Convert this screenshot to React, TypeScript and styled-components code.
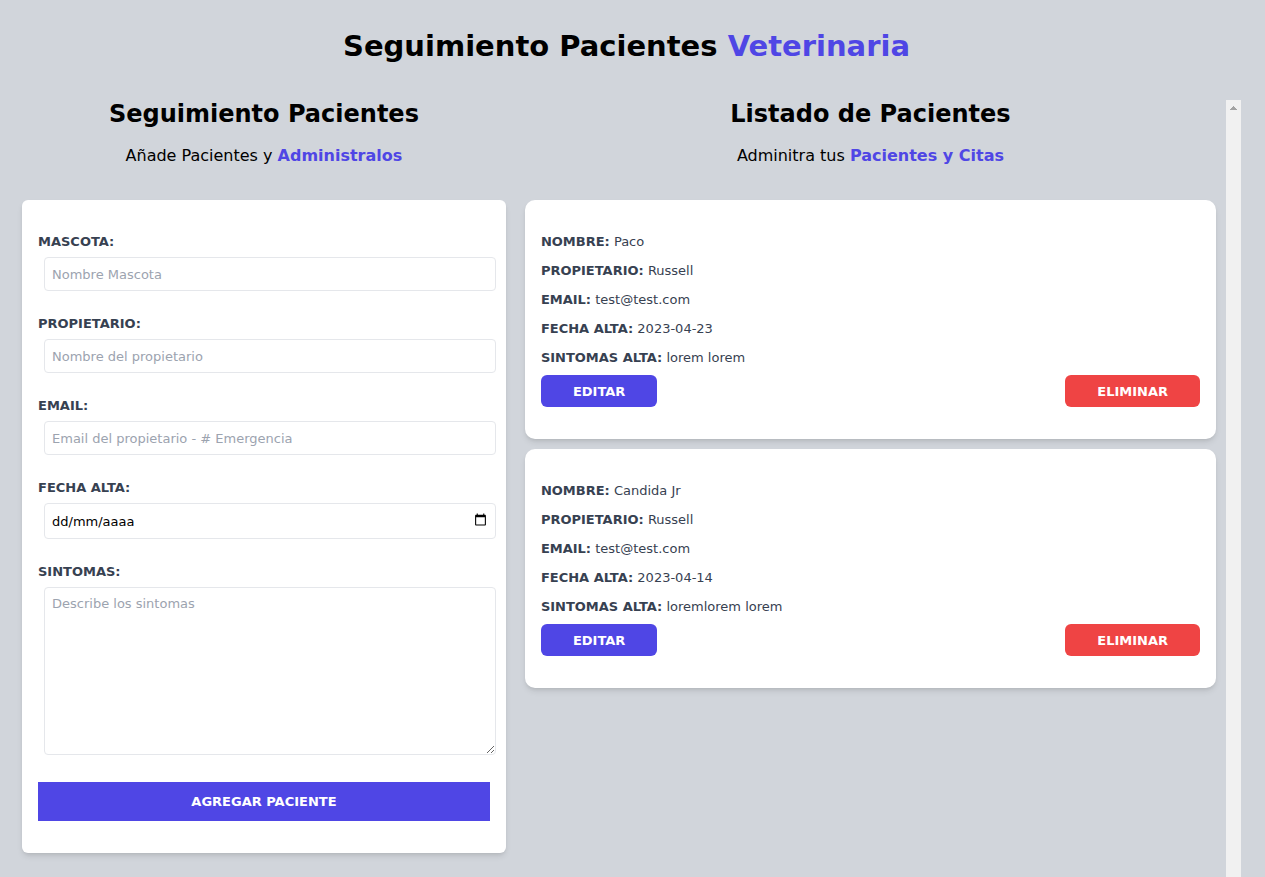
import React, { useState } from "react";
import styled, { createGlobalStyle } from "styled-components";

const indigo = "#4f46e5";
const red = "#ef4444";
const slate = "#374151";

const GlobalStyle = createGlobalStyle`
  *, *::before, *::after { box-sizing: border-box; }
  body {
    margin: 0;
    background: #d1d5db;
    font-family: "DejaVu Sans", sans-serif;
    font-size: 13px;
    line-height: 19px;
    color: #000;
  }
  h1, h2, p { margin: 0; }
  button, input, textarea { font: inherit; }
`;

const Page = styled.div`
  display: flex;
  flex-direction: column;
  min-height: 100vh;
  padding: 28px 24px 0 12px;
`;

const Title = styled.h1`
  font-size: 29px;
  line-height: 36px;
  font-weight: 700;
  text-align: center;
`;

const Accent = styled.span`
  color: ${indigo};
  font-weight: 700;
`;

const Columns = styled.main`
  display: flex;
  flex: 1;
  margin-top: 36px;
`;

const FormColumn = styled.section`
  flex: 0 0 41%;
  padding: 0 10px 24px;
`;

const ListColumn = styled.section`
  flex: 1;
  min-width: 0;
  padding: 0 10px 0 9px;
`;

const ScrollTrack = styled.div`
  flex: none;
  width: 15px;
  background: #f1f1f1;
  svg { display: block; }
`;

const Heading = styled.h2`
  font-size: 24px;
  line-height: 28px;
  font-weight: 700;
  text-align: center;
`;

const Lead = styled.p`
  margin: 16px 0 32px;
  font-size: 16px;
  line-height: 24px;
  text-align: center;
`;

const cardShadow = "0 4px 6px -1px rgba(0, 0, 0, 0.1), 0 2px 4px -2px rgba(0, 0, 0, 0.1)";

const Form = styled.form`
  background: #fff;
  border-radius: 6px;
  box-shadow: ${cardShadow};
  padding: 32px 16px;
`;

const Field = styled.div`
  margin-bottom: 23px;
`;

const Label = styled.label`
  display: block;
  margin-bottom: 6px;
  color: ${slate};
  font-weight: 700;
  text-transform: uppercase;
`;

const Input = styled.input`
  display: block;
  width: 100%;
  height: 34px;
  margin-left: 6px;
  padding: 0 7px;
  border: 1px solid #e5e7eb;
  border-radius: 4px;
  background: #fff;
  color: #000;
  &::placeholder { color: #9ca3af; opacity: 1; }
`;

const DateBox = styled.div`
  position: relative;
`;

const DateInput = styled(Input)`
  height: 36px;
  &::placeholder { color: #000; }
`;

const PickerButton = styled.button`
  position: absolute;
  top: 10px;
  right: 3px;
  width: 13px;
  height: 13px;
  padding: 0;
  border: 0;
  background: none;
  svg { display: block; }
`;

const TextArea = styled.textarea`
  display: block;
  width: 100%;
  height: 168px;
  margin-left: 6px;
  padding: 6px 7px;
  border: 1px solid #e5e7eb;
  border-radius: 4px;
  resize: vertical;
  &::placeholder { color: #9ca3af; opacity: 1; }
`;

const Submit = styled.button`
  display: block;
  width: 100%;
  margin-top: 27px;
  padding: 10px;
  border: 0;
  background: ${indigo};
  color: #fff;
  font-weight: 700;
  text-transform: uppercase;
  cursor: pointer;
`;

const Card = styled.article`
  margin-bottom: 10px;
  padding: 32px 16px;
  background: #fff;
  border-radius: 10px;
  box-shadow: ${cardShadow};
`;

const Details = styled.div`
  display: flex;
  flex-direction: column;
  gap: 10px;
`;

const Detail = styled.p`
  color: ${slate};
  b { text-transform: uppercase; }
`;

const Actions = styled.div`
  display: flex;
  justify-content: space-between;
  margin-top: 8px;
`;

const ActionButton = styled.button<{ $color: string }>`
  height: 32px;
  padding: 0 32px;
  border: 0;
  border-radius: 6px;
  background: ${(p) => p.$color};
  color: #fff;
  font-weight: 700;
  text-transform: uppercase;
  cursor: pointer;
`;

const initialPatients = [
  { nombre: "Paco", propietario: "Russell", email: "test@test.com", fecha: "2023-04-23", sintomas: "lorem lorem" },
  { nombre: "Candida Jr", propietario: "Russell", email: "test@test.com", fecha: "2023-04-14", sintomas: "loremlorem lorem" },
];

function CalendarIcon() {
  return (
    <svg width="13" height="13" viewBox="0 0 24 24" aria-hidden="true">
      <path d="M20 3h-1V1h-2v2H7V1H5v2H4c-1.1 0-2 .9-2 2v16c0 1.1.9 2 2 2h16c1.1 0 2-.9 2-2V5c0-1.1-.9-2-2-2zm0 18H4V8h16v13z" fill="#000" />
    </svg>
  );
}

export default function App() {
  const [patients, setPatients] = useState(initialPatients);

  return (
    <>
      <GlobalStyle />
      <Page>
        <Title>
          Seguimiento Pacientes <Accent>Veterinaria</Accent>
        </Title>
        <Columns>
          <FormColumn>
            <Heading>Seguimiento Pacientes</Heading>
            <Lead>
              Añade Pacientes y <Accent>Administralos</Accent>
            </Lead>
            <Form onSubmit={(e) => e.preventDefault()}>
              <Field>
                <Label htmlFor="mascota">Mascota:</Label>
                <Input id="mascota" type="text" placeholder="Nombre Mascota" />
              </Field>
              <Field>
                <Label htmlFor="propietario">Propietario:</Label>
                <Input id="propietario" type="text" placeholder="Nombre del propietario" />
              </Field>
              <Field>
                <Label htmlFor="email">Email:</Label>
                <Input id="email" type="email" placeholder="Email del propietario - # Emergencia" />
              </Field>
              <Field>
                <Label htmlFor="alta">Fecha Alta:</Label>
                <DateBox>
                  <DateInput id="alta" type="text" inputMode="numeric" placeholder="dd/mm/aaaa" />
                  <PickerButton type="button" aria-label="Abrir calendario">
                    <CalendarIcon />
                  </PickerButton>
                </DateBox>
              </Field>
              <Label htmlFor="sintomas">Sintomas:</Label>
              <TextArea id="sintomas" placeholder="Describe los sintomas" />
              <Submit type="submit">Agregar Paciente</Submit>
            </Form>
          </FormColumn>
          <ListColumn>
            <Heading>Listado de Pacientes</Heading>
            <Lead>
              Adminitra tus <Accent>Pacientes y Citas</Accent>
            </Lead>
            {patients.map((p) => (
              <Card key={p.nombre}>
                <Details>
                  <Detail><b>Nombre:</b> {p.nombre}</Detail>
                  <Detail><b>Propietario:</b> {p.propietario}</Detail>
                  <Detail><b>Email:</b> {p.email}</Detail>
                  <Detail><b>Fecha Alta:</b> {p.fecha}</Detail>
                  <Detail><b>Sintomas Alta:</b> {p.sintomas}</Detail>
                </Details>
                <Actions>
                  <ActionButton type="button" $color={indigo}>Editar</ActionButton>
                  <ActionButton
                    type="button"
                    $color={red}
                    onClick={() => setPatients(patients.filter((q) => q !== p))}
                  >
                    Eliminar
                  </ActionButton>
                </Actions>
              </Card>
            ))}
          </ListColumn>
          <ScrollTrack aria-hidden="true">
            <svg width="15" height="15" viewBox="0 0 15 15" shapeRendering="crispEdges">
              <path d="M7 6h1v1h1v1h1v1h1v1H4V9h1V8h1V7h1z" fill="#a3a3a3" />
            </svg>
          </ScrollTrack>
        </Columns>
      </Page>
    </>
  );
}
